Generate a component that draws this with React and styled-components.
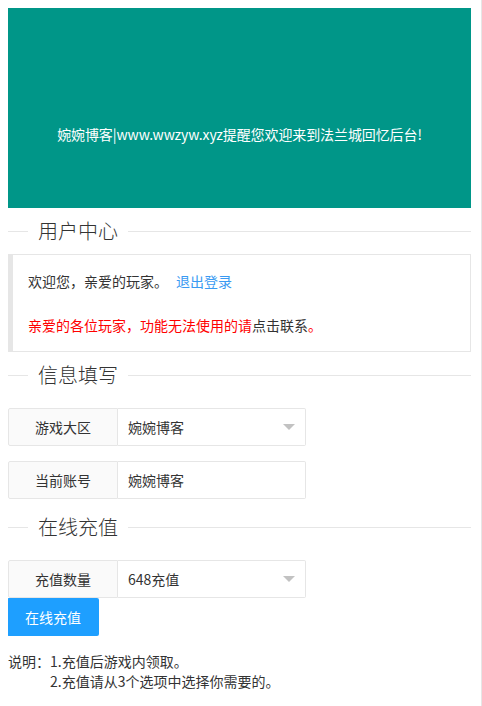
import React from 'react'
import styled, { createGlobalStyle } from 'styled-components'

const GlobalStyle = createGlobalStyle`
html {
  min-height: 100%;
  box-shadow: inset -1px 0 0 #e6e6e6;
}
body {
  margin: 8px;
  font-family: "Noto Sans CJK SC", "Liberation Sans", sans-serif;
  font-size: 14px;
  color: #333;
  background: #fff;
}
`

const Page = styled.div`
width: 463px;
`

const Banner = styled.div`
height: 200px;
background-color: #009688;
color: #fff;
display: flex;
justify-content: center;
align-items: center;
padding-top: 52px;
box-sizing: border-box;
font-size: 14px;
letter-spacing: -0.1px;
`

const Legend = styled.div`
display: flex;
align-items: center;
height: 28px;
margin: ${p => p.$before || 9}px 0 ${p => p.$after}px;
font-size: 20px;
font-weight: 300;
color: #333;
&::before {
  content: '';
  width: 20px;
  border-top: 1px solid #e6e6e6;
}
&::after {
  content: '';
  flex: 1;
  border-top: 1px solid #e6e6e6;
}
span {
  padding: 0 10px;
  line-height: 28px;
}
`

const Quote = styled.div`
border: 1px solid #e6e6e6;
border-left-width: 5px;
padding: 15px;
line-height: 22px;
`

const Line = styled.p`
margin: 0;
color: ${p => p.$red ? '#ff0000' : '#333'};
`

const Gap = styled.div`
height: 22px;
`

const Link = styled.a`
color: #3a9af2;
text-decoration: none;
margin-left: 8px;
`

const Dark = styled.span`
color: #333;
`

const FormRow = styled.div`
display: flex;
width: 298px;
height: 38px;
margin-bottom: ${p => p.$mb || 0}px;
`

const Label = styled.div`
width: 110px;
box-sizing: border-box;
border: 1px solid #e6e6e6;
border-radius: 2px 0 0 2px;
background: #fafafa;
display: flex;
align-items: center;
justify-content: center;
`

const Field = styled.div`
flex: 1;
position: relative;
box-sizing: border-box;
border: 1px solid #e6e6e6;
border-left: none;
border-radius: 0 2px 2px 0;
display: flex;
align-items: center;
padding-left: 10px;
`

const Caret = styled.i`
position: absolute;
right: 10px;
top: 50%;
margin-top: -3px;
width: 0;
height: 0;
border-left: 6px solid transparent;
border-right: 6px solid transparent;
border-top: 6px solid #c2c2c2;
`

const Button = styled.button`
display: block;
height: 38px;
padding: 0 18px;
margin-left: -1px;
border: none;
border-radius: 2px;
background: #1e9fff;
color: #fff;
font-family: inherit;
font-size: 14px;
`

const Notes = styled.div`
display: flex;
margin-top: 15px;
line-height: 20px;
color: #333;
`

const NoteList = styled.div`
display: flex;
flex-direction: column;
`

const App = () => {
  return (
    <Page>
      <GlobalStyle />
      <Banner>婉婉博客|www.wwzyw.xyz提醒您欢迎来到法兰城回忆后台!</Banner>

      <Legend $after={9}><span>用户中心</span></Legend>
      <Quote>
        <Line>欢迎您，亲爱的玩家。<Link href="#">退出登录</Link></Line>
        <Gap />
        <Line $red>亲爱的各位玩家，功能无法使用的请<Dark>点击联系</Dark>。</Line>
      </Quote>

      <Legend $after={19}><span>信息填写</span></Legend>
      <FormRow $mb={15}>
        <Label>游戏大区</Label>
        <Field>婉婉博客<Caret /></Field>
      </FormRow>
      <FormRow>
        <Label>当前账号</Label>
        <Field>婉婉博客</Field>
      </FormRow>

      <Legend $before={14} $after={19}><span>在线充值</span></Legend>
      <FormRow>
        <Label>充值数量</Label>
        <Field>648充值<Caret /></Field>
      </FormRow>
      <Button>在线充值</Button>

      <Notes>
        <span>说明：</span>
        <NoteList>
          <span>1.充值后游戏内领取。</span>
          <span>2.充值请从3个选项中选择你需要的。</span>
        </NoteList>
      </Notes>
    </Page>
  )
}

export default App
